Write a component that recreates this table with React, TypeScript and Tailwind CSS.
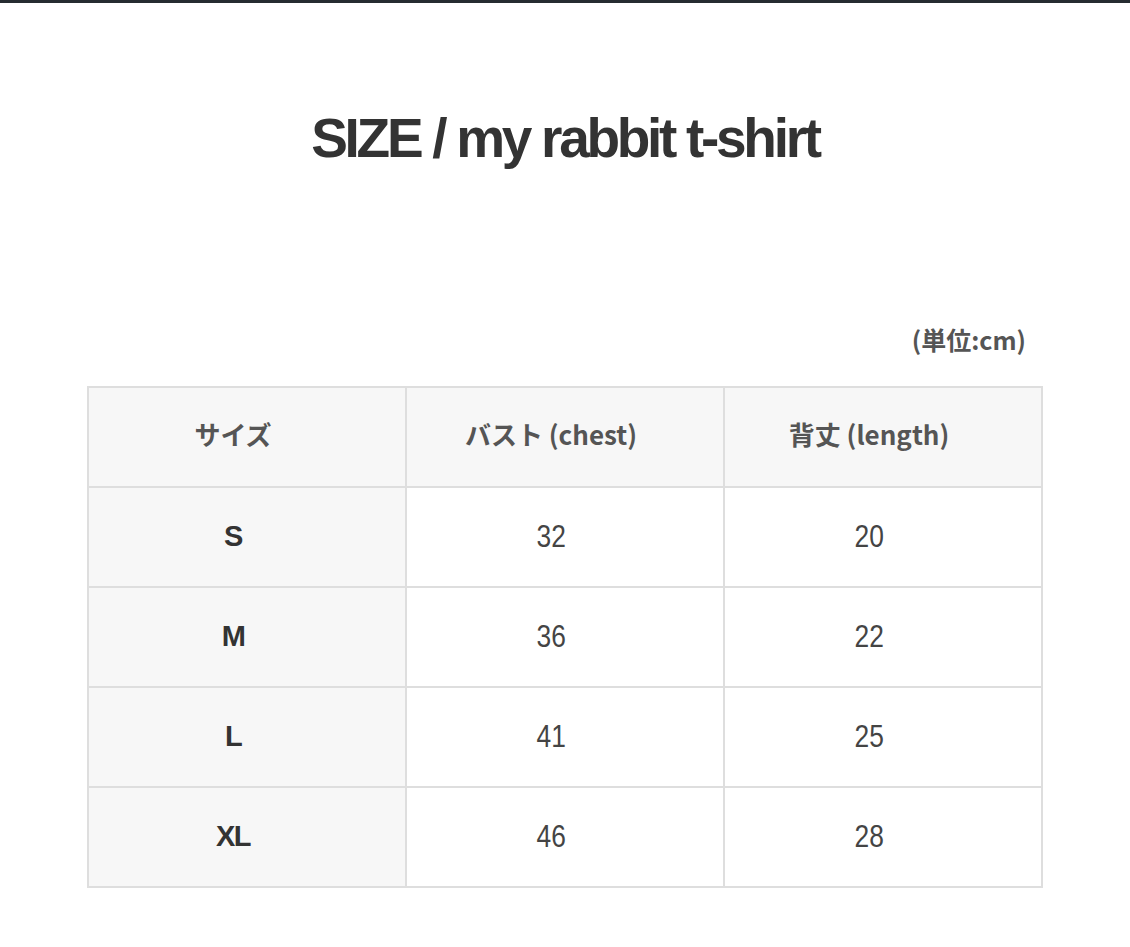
import React from "react";

const rows = [
  { s: "S", b: "32", l: "20" },
  { s: "M", b: "36", l: "22" },
  { s: "L", b: "41", l: "25" },
  { s: "XL", b: "46", l: "28" },
];

export default function App() {
  return (
    <div className="min-h-[947px] w-[1130px] bg-white">
      <div className="h-[3px] bg-[#262c31]" />
      <h1 className="mt-[103px] text-center font-['Liberation_Sans',Arial,sans-serif] text-[55px] leading-[64px] font-bold tracking-[-3.3px] text-[#333333]">
        SIZE / my rabbit t-shirt
      </h1>
      <div className="mt-[155px] flex justify-end pr-[104px] font-['Noto_Sans_CJK_JP','Noto_Sans',sans-serif] text-[25px] leading-[28px] font-bold text-[#555555]">
        (単位:cm)
      </div>
      <div className="mx-auto mt-[33px] grid w-[956px] grid-cols-3 border-t-2 border-l-2 border-[#dedede]">
        {["サイズ", "バスト (chest)", "背丈 (length)"].map((h) => (
          <div
            key={h}
            className="flex h-[100px] items-center justify-center border-r-2 border-b-2 border-[#dedede] bg-[#f7f7f7] pr-[28px] pb-[8px] font-['Noto_Sans_CJK_JP','Noto_Sans',sans-serif] text-[26px] font-bold text-[#555555]"
          >
            {h}
          </div>
        ))}
        {rows.map((r) => (
          <React.Fragment key={r.s}>
            <div className="flex h-[100px] items-center justify-center border-r-2 border-b-2 border-[#dedede] bg-[#f7f7f7] pr-[28px] font-['Liberation_Sans',Arial,sans-serif] text-[29px] font-bold tracking-[-1.5px] text-[#333333]">
              {r.s}
            </div>
            <div className="flex h-[100px] items-center justify-center border-r-2 border-b-2 border-[#dedede] bg-white pr-[28px] font-['Liberation_Sans',Arial,sans-serif] text-[31px] text-[#444444]">
              <span className="inline-block scale-x-[0.85]">{r.b}</span>
            </div>
            <div className="flex h-[100px] items-center justify-center border-r-2 border-b-2 border-[#dedede] bg-white pr-[28px] font-['Liberation_Sans',Arial,sans-serif] text-[31px] text-[#444444]">
              <span className="inline-block scale-x-[0.85]">{r.l}</span>
            </div>
          </React.Fragment>
        ))}
      </div>
    </div>
  );
}
